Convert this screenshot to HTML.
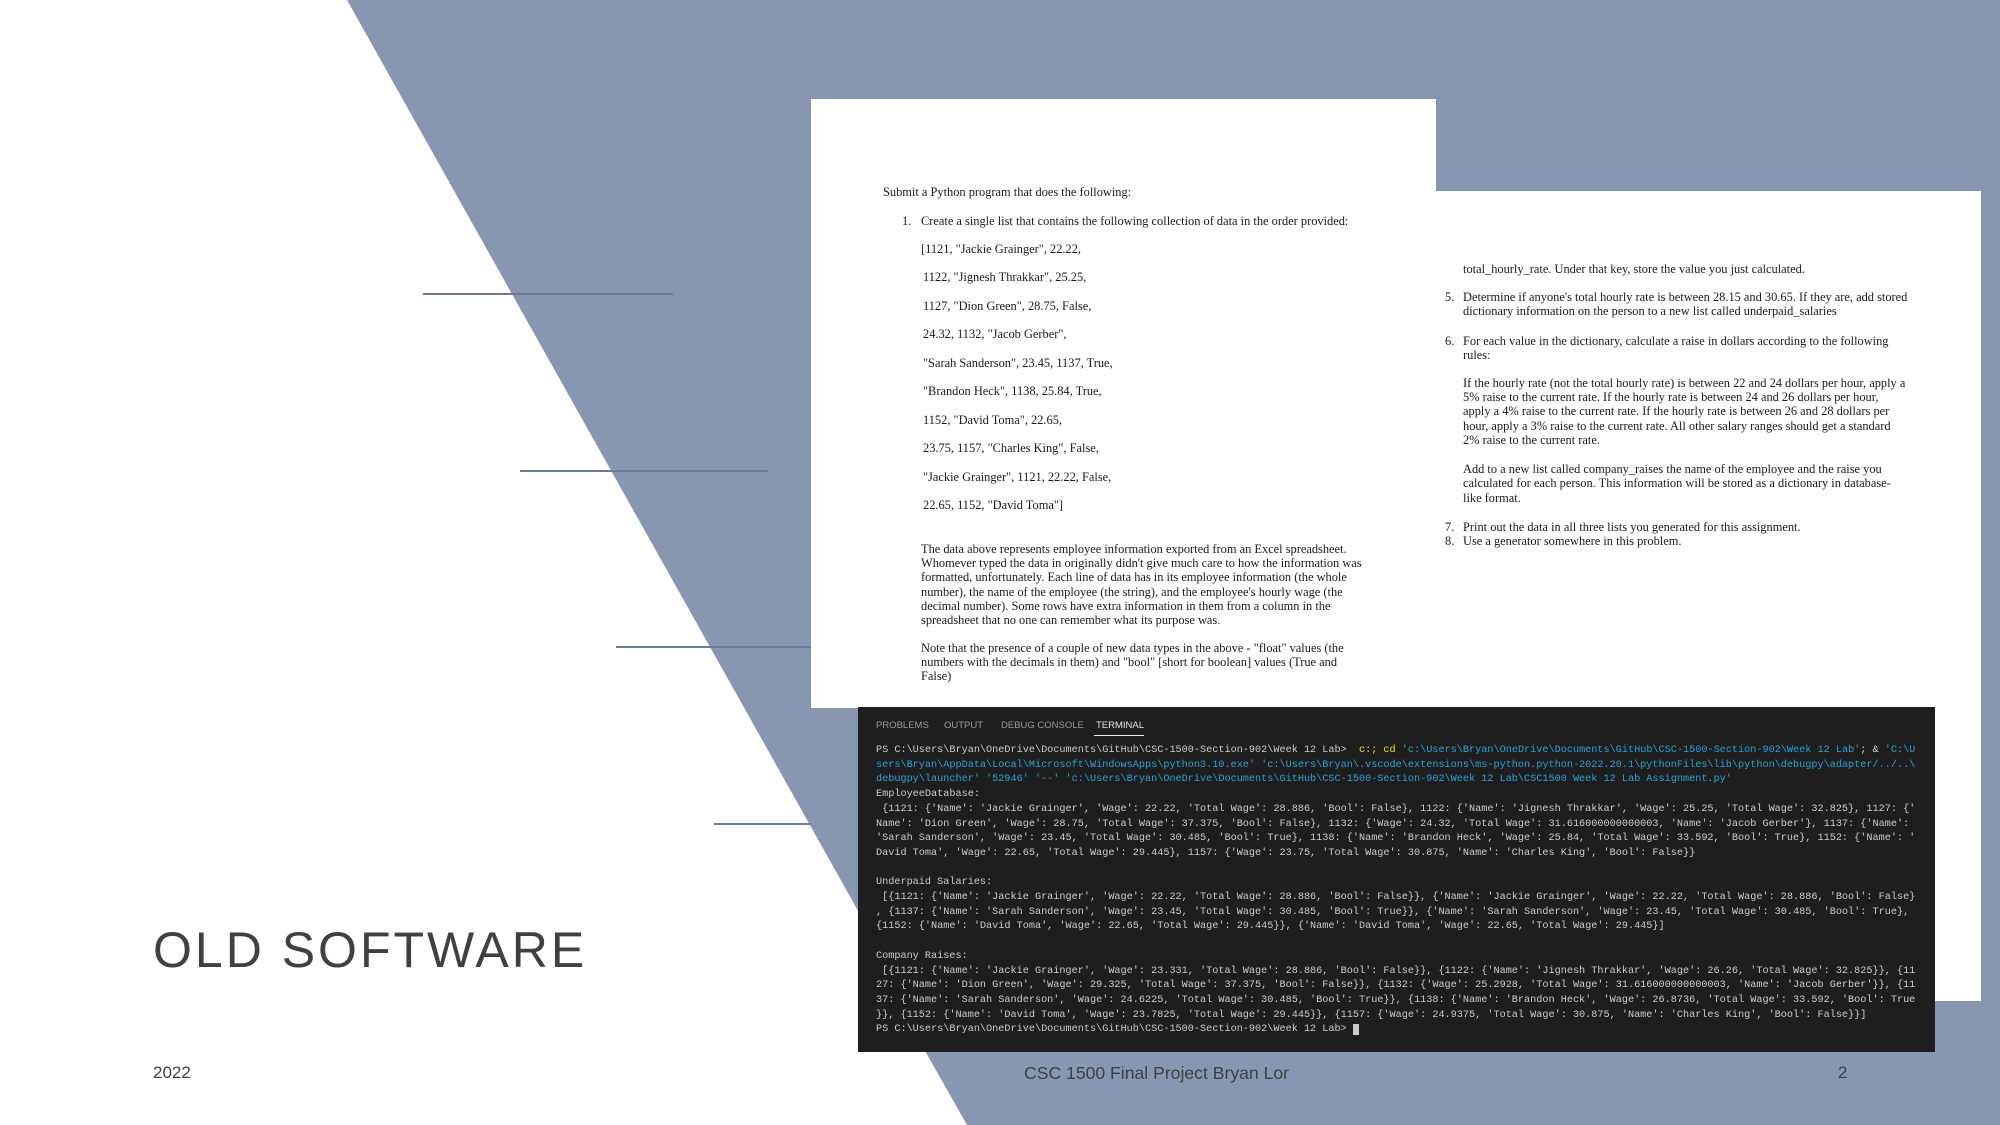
<!DOCTYPE html>
<html><head><meta charset="utf-8"><style>
html,body{margin:0;padding:0}
body{width:2000px;height:1125px;position:relative;overflow:hidden;background:#fff;font-family:"Liberation Sans",sans-serif}
.a{position:absolute}
.hl{position:absolute;height:2px;background:#6c7c98}
.doc{position:absolute;background:#fff;font-family:"Liberation Serif",serif;font-size:12.4px;color:#1a1a1a}
.doc div{position:absolute;white-space:nowrap}
.term{position:absolute;left:858px;top:707px;width:1077px;height:345px;background:#1e1e1e;font-family:"Liberation Mono",monospace;font-size:10.2px;color:#cccccc}
.term .ln{position:absolute;left:18px;white-space:pre;line-height:14.7px}
.b{color:#2aa0d8}.y{color:#e5e510}
.tab{position:absolute;top:13px;font-family:"Liberation Sans",sans-serif;font-size:9.5px;color:#9a9a9a}
</style></head><body>
<svg class="a" style="left:0;top:0" width="2000" height="1125">
<polygon points="347,0 2000,0 2000,1125 967,1125 860,936 866,925" fill="#8797b1"/>
</svg>
<div class="hl" style="left:423px;top:293px;width:250px"></div>
<div class="hl" style="left:520px;top:470px;width:248px"></div>
<div class="hl" style="left:616px;top:646px;width:195px"></div>
<div class="hl" style="left:714px;top:823px;width:97px"></div>

<div class="doc" style="left:1436px;top:191px;width:545px;height:810px">
<div style="left:27px;top:71px">total_hourly_rate. Under that key, store the value you just calculated.</div>
<div style="left:9px;top:99px">5.</div>
<div style="left:27px;top:99px">Determine if anyone's total hourly rate is between 28.15 and 30.65. If they are, add stored</div>
<div style="left:27px;top:113px">dictionary information on the person to a new list called underpaid_salaries</div>
<div style="left:9px;top:143px">6.</div>
<div style="left:27px;top:143px">For each value in the dictionary, calculate a raise in dollars according to the following</div>
<div style="left:27px;top:157px">rules:</div>
<div style="left:27px;top:185px">If the hourly rate (not the total hourly rate) is between 22 and 24 dollars per hour, apply a</div>
<div style="left:27px;top:199px">5% raise to the current rate. If the hourly rate is between 24 and 26 dollars per hour,</div>
<div style="left:27px;top:213px">apply a 4% raise to the current rate. If the hourly rate is between 26 and 28 dollars per</div>
<div style="left:27px;top:228px">hour, apply a 3% raise to the current rate. All other salary ranges should get a standard</div>
<div style="left:27px;top:242px">2% raise to the current rate.</div>
<div style="left:27px;top:271px">Add to a new list called company_raises the name of the employee and the raise you</div>
<div style="left:27px;top:285px">calculated for each person. This information will be stored as a dictionary in database-</div>
<div style="left:27px;top:300px">like format.</div>
<div style="left:9px;top:329px">7.</div>
<div style="left:27px;top:329px">Print out the data in all three lists you generated for this assignment.</div>
<div style="left:9px;top:343px">8.</div>
<div style="left:27px;top:343px">Use a generator somewhere in this problem.</div>
</div>

<div class="doc" style="left:811px;top:99px;width:625px;height:609px">
<div style="left:72px;top:86px">Submit a Python program that does the following:</div>
<div style="left:91px;top:115px">1.</div>
<div style="left:110px;top:115px">Create a single list that contains the following collection of data in the order provided:</div>
<div style="left:110px;top:143px">[1121, "Jackie Grainger", 22.22,</div>
<div style="left:112px;top:171px">1122, "Jignesh Thrakkar", 25.25,</div>
<div style="left:112px;top:200px">1127, "Dion Green", 28.75, False,</div>
<div style="left:112px;top:228px">24.32, 1132, "Jacob Gerber",</div>
<div style="left:112px;top:257px">"Sarah Sanderson", 23.45, 1137, True,</div>
<div style="left:112px;top:285px">"Brandon Heck", 1138, 25.84, True,</div>
<div style="left:112px;top:314px">1152, "David Toma", 22.65,</div>
<div style="left:112px;top:342px">23.75, 1157, "Charles King", False,</div>
<div style="left:112px;top:371px">"Jackie Grainger", 1121, 22.22, False,</div>
<div style="left:112px;top:399px">22.65, 1152, "David Toma"]</div>
<div style="left:110px;top:443px">The data above represents employee information exported from an Excel spreadsheet.</div>
<div style="left:110px;top:457px">Whomever typed the data in originally didn't give much care to how the information was</div>
<div style="left:110px;top:471px">formatted, unfortunately. Each line of data has in its employee information (the whole</div>
<div style="left:110px;top:486px">number), the name of the employee (the string), and the employee's hourly wage (the</div>
<div style="left:110px;top:500px">decimal number). Some rows have extra information in them from a column in the</div>
<div style="left:110px;top:514px">spreadsheet that no one can remember what its purpose was.</div>
<div style="left:110px;top:542px">Note that the presence of a couple of new data types in the above - "float" values (the</div>
<div style="left:110px;top:556px">numbers with the decimals in them) and "bool" [short for boolean] values (True and</div>
<div style="left:110px;top:570px">False)</div>
</div>

<div class="term">
<div class="tab" style="left:18px">PROBLEMS</div>
<div class="tab" style="left:86px">OUTPUT</div>
<div class="tab" style="left:143px">DEBUG CONSOLE</div>
<div class="tab" style="left:238px;color:#e7e7e7">TERMINAL</div>
<div class="a" style="left:236px;top:28px;width:50px;height:1px;background:#e7e7e7"></div>
<div class="ln" style="top:37px">PS C:\Users\Bryan\OneDrive\Documents\GitHub\CSC-1500-Section-902\Week 12 Lab>  <span class="y">c:; cd</span> <span class="b">'c:\Users\Bryan\OneDrive\Documents\GitHub\CSC-1500-Section-902\Week 12 Lab'</span>; &amp; <span class="b">'C:\U</span>
<span class="b">sers\Bryan\AppData\Local\Microsoft\WindowsApps\python3.10.exe' 'c:\Users\Bryan\.vscode\extensions\ms-python.python-2022.20.1\pythonFiles\lib\python\debugpy\adapter/../..\</span>
<span class="b">debugpy\launcher' '52946' '--' 'c:\Users\Bryan\OneDrive\Documents\GitHub\CSC-1500-Section-902\Week 12 Lab\CSC1500 Week 12 Lab Assignment.py'</span>
EmployeeDatabase:
 {1121: {'Name': 'Jackie Grainger', 'Wage': 22.22, 'Total Wage': 28.886, 'Bool': False}, 1122: {'Name': 'Jignesh Thrakkar', 'Wage': 25.25, 'Total Wage': 32.825}, 1127: {'
Name': 'Dion Green', 'Wage': 28.75, 'Total Wage': 37.375, 'Bool': False}, 1132: {'Wage': 24.32, 'Total Wage': 31.616000000000003, 'Name': 'Jacob Gerber'}, 1137: {'Name':
'Sarah Sanderson', 'Wage': 23.45, 'Total Wage': 30.485, 'Bool': True}, 1138: {'Name': 'Brandon Heck', 'Wage': 25.84, 'Total Wage': 33.592, 'Bool': True}, 1152: {'Name': '
David Toma', 'Wage': 22.65, 'Total Wage': 29.445}, 1157: {'Wage': 23.75, 'Total Wage': 30.875, 'Name': 'Charles King', 'Bool': False}}

Underpaid Salaries:
 [{1121: {'Name': 'Jackie Grainger', 'Wage': 22.22, 'Total Wage': 28.886, 'Bool': False}}, {'Name': 'Jackie Grainger', 'Wage': 22.22, 'Total Wage': 28.886, 'Bool': False}
, {1137: {'Name': 'Sarah Sanderson', 'Wage': 23.45, 'Total Wage': 30.485, 'Bool': True}}, {'Name': 'Sarah Sanderson', 'Wage': 23.45, 'Total Wage': 30.485, 'Bool': True},
{1152: {'Name': 'David Toma', 'Wage': 22.65, 'Total Wage': 29.445}}, {'Name': 'David Toma', 'Wage': 22.65, 'Total Wage': 29.445}]

Company Raises:
 [{1121: {'Name': 'Jackie Grainger', 'Wage': 23.331, 'Total Wage': 28.886, 'Bool': False}}, {1122: {'Name': 'Jignesh Thrakkar', 'Wage': 26.26, 'Total Wage': 32.825}}, {11
27: {'Name': 'Dion Green', 'Wage': 29.325, 'Total Wage': 37.375, 'Bool': False}}, {1132: {'Wage': 25.2928, 'Total Wage': 31.616000000000003, 'Name': 'Jacob Gerber'}}, {11
37: {'Name': 'Sarah Sanderson', 'Wage': 24.6225, 'Total Wage': 30.485, 'Bool': True}}, {1138: {'Name': 'Brandon Heck', 'Wage': 26.8736, 'Total Wage': 33.592, 'Bool': True
}}, {1152: {'Name': 'David Toma', 'Wage': 23.7825, 'Total Wage': 29.445}}, {1157: {'Wage': 24.9375, 'Total Wage': 30.875, 'Name': 'Charles King', 'Bool': False}}]
PS C:\Users\Bryan\OneDrive\Documents\GitHub\CSC-1500-Section-902\Week 12 Lab> <span style="background:#cccccc"> </span></div>
</div>

<div class="a" style="left:153px;top:921px;font-size:50px;letter-spacing:3px;color:#404040;white-space:nowrap">OLD SOFTWARE</div>
<div class="a" style="left:153px;top:1063px;font-size:17px;color:#404040">2022</div>
<div class="a" style="left:1024px;top:1063px;font-size:17.6px;color:#404040;white-space:nowrap">CSC 1500 Final Project Bryan Lor</div>
<div class="a" style="left:1838px;top:1063px;font-size:17px;color:#404040">2</div>
</body></html>
